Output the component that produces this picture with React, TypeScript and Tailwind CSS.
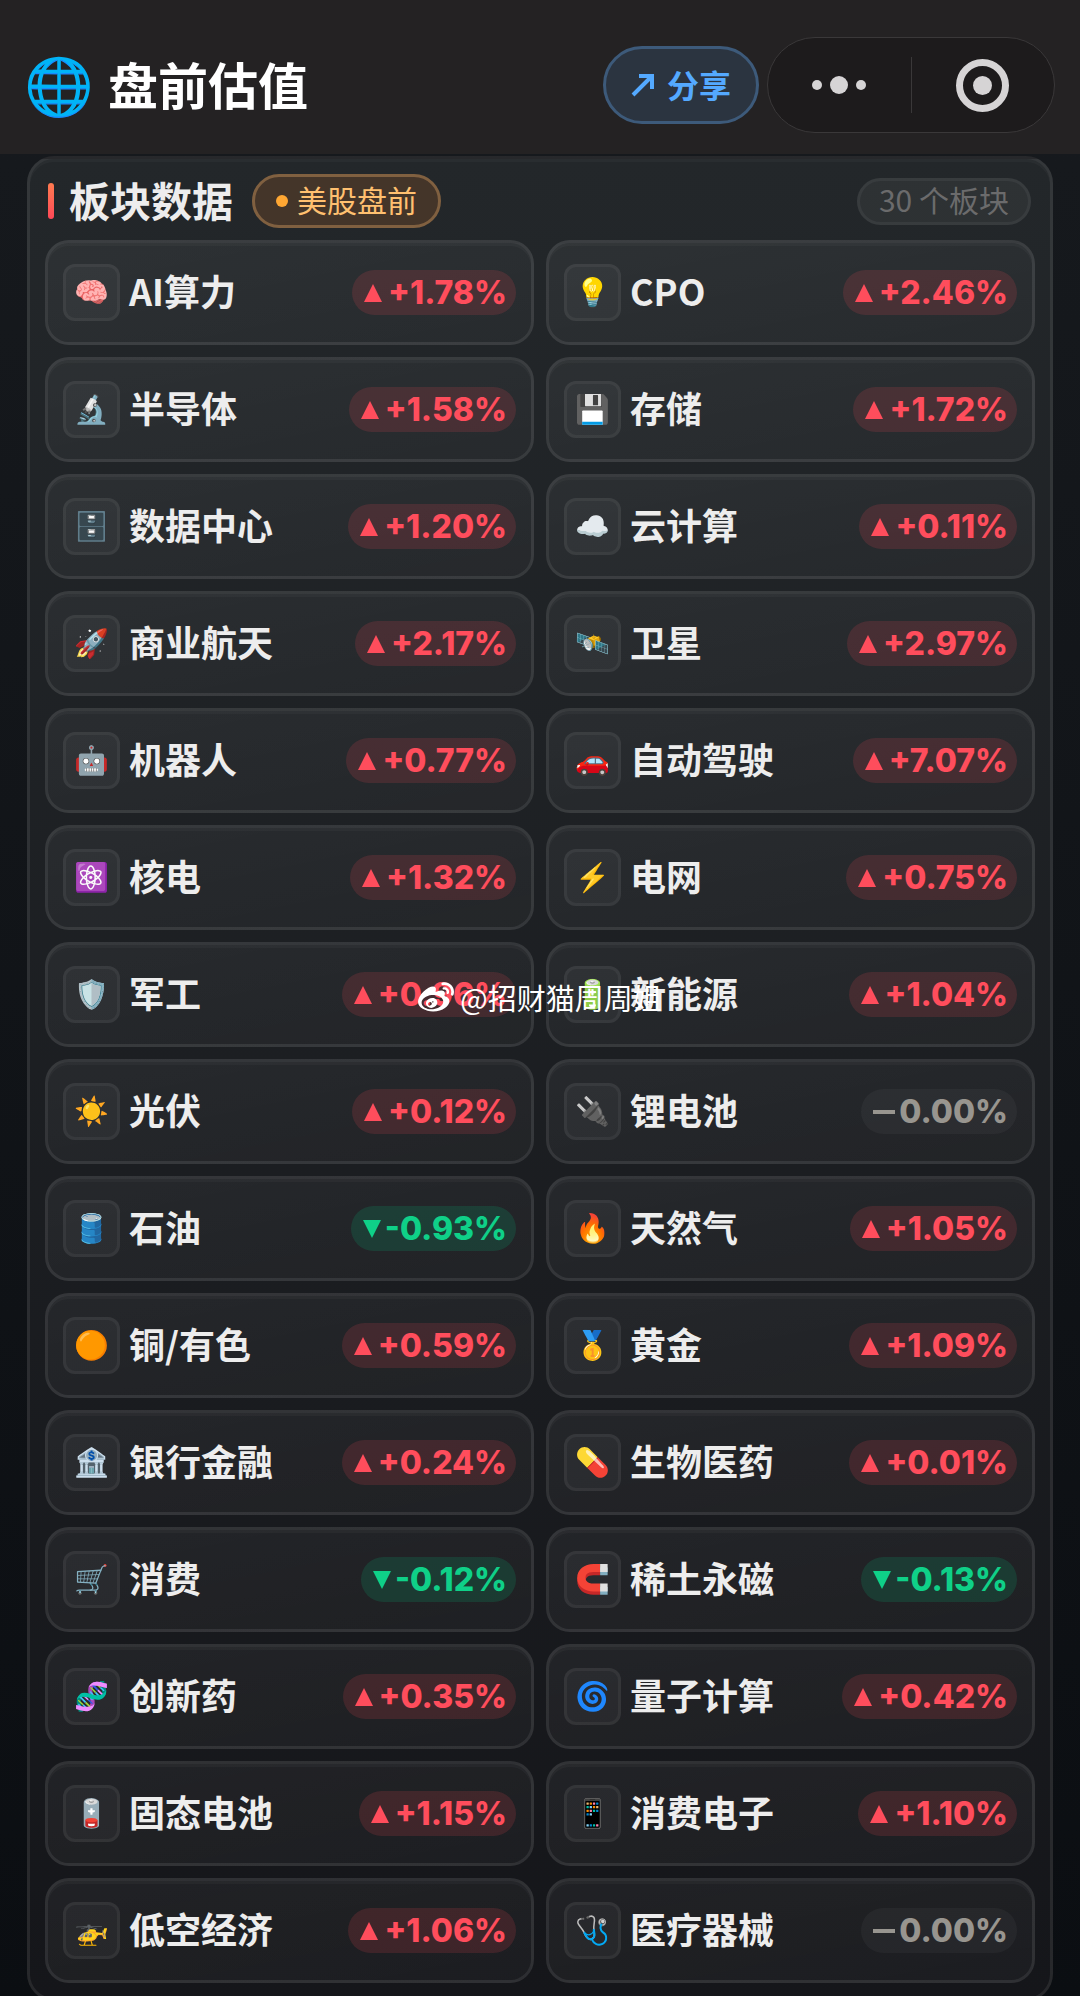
import { FaWeibo } from 'react-icons/fa';

type Sector = { icon: string; name: string; change: number };

const SECTORS: Sector[] = [
  { icon: '🧠', name: 'AI算力', change: 1.78 },
  { icon: '💡', name: 'CPO', change: 2.46 },
  { icon: '🔬', name: '半导体', change: 1.58 },
  { icon: '💾', name: '存储', change: 1.72 },
  { icon: '🗄️', name: '数据中心', change: 1.2 },
  { icon: '☁️', name: '云计算', change: 0.11 },
  { icon: '🚀', name: '商业航天', change: 2.17 },
  { icon: '🛰️', name: '卫星', change: 2.97 },
  { icon: '🤖', name: '机器人', change: 0.77 },
  { icon: '🚗', name: '自动驾驶', change: 7.07 },
  { icon: '⚛️', name: '核电', change: 1.32 },
  { icon: '⚡', name: '电网', change: 0.75 },
  { icon: '🛡️', name: '军工', change: 0.96 },
  { icon: '🔋', name: '新能源', change: 1.04 },
  { icon: '☀️', name: '光伏', change: 0.12 },
  { icon: '🔌', name: '锂电池', change: 0 },
  { icon: '🛢️', name: '石油', change: -0.93 },
  { icon: '🔥', name: '天然气', change: 1.05 },
  { icon: '🟠', name: '铜/有色', change: 0.59 },
  { icon: '🥇', name: '黄金', change: 1.09 },
  { icon: '🏦', name: '银行金融', change: 0.24 },
  { icon: '💊', name: '生物医药', change: 0.01 },
  { icon: '🛒', name: '消费', change: -0.12 },
  { icon: '🧲', name: '稀土永磁', change: -0.13 },
  { icon: '🧬', name: '创新药', change: 0.35 },
  { icon: '🌀', name: '量子计算', change: 0.42 },
  { icon: '🪫', name: '固态电池', change: 1.15 },
  { icon: '📱', name: '消费电子', change: 1.1 },
  { icon: '🚁', name: '低空经济', change: 1.06 },
  { icon: '🩺', name: '医疗器械', change: 0 },
];

function ChangePill({ value }: { value: number }) {
  const text = `${value > 0 ? '+' : ''}${value.toFixed(2)}%`;
  const tone =
    value > 0
      ? 'gap-[6px] bg-[#ff4757]/15 text-[#ff4d5c]'
      : value < 0
        ? 'gap-1 bg-[#00d084]/15 text-[#0fd088]'
        : 'gap-1 bg-white/4 text-[#98958f]';
  return (
    <span className={`flex h-[45px] shrink-0 items-center rounded-full pr-[9px] pl-3 font-['Inter',sans-serif] text-[32px] font-extrabold ${tone}`}>
      {value === 0 ? (
        <svg viewBox="0 0 22 4" className="h-1 w-[22px]" fill="currentColor"><rect width="22" height="4" /></svg>
      ) : (
        <svg viewBox="0 0 18 18" className="size-[18px]" fill="currentColor">
          <path d={value > 0 ? 'M9 0 18 18H0z' : 'M9 18 0 0h18z'} />
        </svg>
      )}
      {text}
    </span>
  );
}

function SectorCard({ icon, name, change }: Sector) {
  return (
    <li className="flex h-[105px] items-center rounded-3xl border-3 border-white/8 bg-linear-to-br from-white/5 to-white/3 px-[15px] shadow-[inset_0_3px_0_rgba(255,255,255,0.03)]">
      <span className="flex size-[57px] shrink-0 items-center justify-center rounded-xl border-3 border-white/5 bg-white/4 pb-[6px] text-[28px]">
        {icon}
      </span>
      <span className="ml-[9px] grow pb-[6px] text-4xl font-bold whitespace-nowrap text-[#ededed]">{name}</span>
      <ChangePill value={change} />
    </li>
  );
}

export default function App() {
  return (
    <div className="relative flex h-screen flex-col overflow-hidden bg-linear-to-b from-[#171a1e] to-[#0b0e12] font-['Noto_Sans_CJK_SC',sans-serif]">
      <header className="flex shrink-0 items-center bg-[#242223] pt-[37px] pr-[25px] pb-[21px] pl-6">
        <span className="pb-[6px] text-[56px] leading-none">🌐</span>
        <h1 className="ml-[14px] pb-1 text-[50px] leading-none font-bold text-white">盘前估值</h1>
        <button className="ml-auto flex h-[78px] w-[156px] items-center justify-center gap-3 rounded-full border-3 border-[#3d5a7a] bg-[#2b3440] text-[32px] font-bold text-[#54a9ff]">
          <svg viewBox="0 0 24 24" className="size-6" fill="none" stroke="currentColor" strokeWidth="4">
            <path d="M2 22 21 3M8 3h13v13" />
          </svg>
          <span className="pb-[2px]">分享</span>
        </button>
        <div className="ml-2 flex h-24 w-72 items-center rounded-full border border-[#3a3839] bg-[#1d1b1c] text-[#d6d4d5]">
          <button className="flex h-full w-1/2 items-center justify-center gap-2" aria-label="更多">
            <i className="size-[10px] rounded-full bg-current" />
            <i className="size-[18px] rounded-full bg-current" />
            <i className="size-[10px] rounded-full bg-current" />
          </button>
          <i className="h-14 w-px bg-[#3a3839]" />
          <button className="flex h-full w-1/2 items-center justify-center" aria-label="关闭">
            <span className="flex size-[53px] items-center justify-center rounded-full border-7 border-current">
              <i className="size-[19px] rounded-full bg-current" />
            </span>
          </button>
        </div>
      </header>

      <main className="grow overflow-y-auto px-[27px] pt-[2px] [scrollbar-width:none]">
        <section className="rounded-[27px] border-3 border-white/8 bg-linear-to-b from-[#23272a] to-[#15161a] p-[15px] shadow-[inset_0_3px_0_rgba(255,255,255,0.03)]">
          <div className="flex h-[54px] items-center">
            <i className="ml-[3px] h-9 w-[6px] rounded-full bg-linear-to-b from-[#ff7a50] to-[#ff4757]" />
            <h2 className="ml-[15px] pb-1 text-[41px] leading-none font-bold text-[#ededed]">板块数据</h2>
            <span className="ml-[19px] flex h-[54px] items-center gap-[9px] rounded-full border-3 border-[#806040] bg-[#443529] px-[21px] text-[30px] text-[#ffc070]">
              <i className="size-3 rounded-full bg-[#ffa733]" />
              <span className="pb-1">美股盘前</span>
            </span>
            <span className="mr-1 ml-auto flex h-[47px] items-center rounded-full border-3 border-white/5 bg-white/5 px-[19px] pb-1 text-[30px] text-[#6b6b6c]">
              30 个板块
            </span>
          </div>
          <ul className="mt-3 grid grid-cols-2 gap-3">
            {SECTORS.map((s) => <SectorCard key={s.name} {...s} />)}
          </ul>
        </section>
      </main>

      <div className="pointer-events-none absolute inset-0 flex items-center justify-center gap-[6px] text-[29px] text-white">
        <FaWeibo className="size-9" />
        <span>@招财猫周周姐</span>
      </div>
    </div>
  );
}
